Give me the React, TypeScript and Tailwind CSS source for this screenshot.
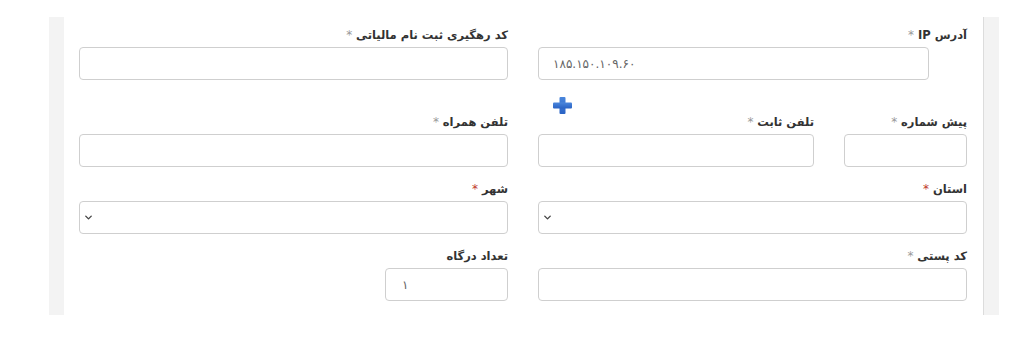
import { ChevronDown } from "lucide-react";

const font = { fontFamily: '"DejaVu Sans", Tahoma, sans-serif' };

const Label = ({ text, req, red }: { text: string; req?: boolean; red?: boolean }) => (
  <div className="h-[16px] mb-[4px] text-[11.5px] leading-[16px] font-bold text-[#333]">
    {text}
    {req && <span className={`font-normal text-[12px] ${red ? "text-[#c0392b]" : "text-[#999]"}`}> *</span>}
  </div>
);

const Input = ({ value, className = "" }: { value?: string; className?: string }) => (
  <div
    dir="ltr"
    className={`h-[33px] border border-[#cfcfcf] rounded-[4px] bg-white flex items-center px-[14px] text-[12px] tracking-[1px] text-[#666] ${className}`}
  >
    {value}
  </div>
);

const Select = () => (
  <div dir="ltr" className="h-[33px] border border-[#cfcfcf] rounded-[4px] bg-white flex items-center px-[3px]">
    <ChevronDown size={11} strokeWidth={3} className="text-[#444]" />
  </div>
);

const PlusIcon = () => (
  <svg width="19" height="17" viewBox="0 0 19 17">
    <defs>
      <linearGradient id="pg" x1="0" y1="0" x2="0" y2="1">
        <stop offset="0" stopColor="#4a86dc" />
        <stop offset="1" stopColor="#2962c4" />
      </linearGradient>
    </defs>
    <rect x="6.5" y="0" width="6" height="17" rx="1" fill="url(#pg)" />
    <rect x="0" y="5.5" width="19" height="6" rx="1" fill="url(#pg)" />
  </svg>
);

export default function App() {
  return (
    <div className="w-[1024px] h-[344px] bg-white pt-[17px] pl-[49px]" style={font}>
      <div className="flex h-[298px]">
        <div className="w-[15px] bg-[#f3f3f3]" />
        <div dir="rtl" className="w-[919px] bg-white pt-[10px] pr-[16px] pl-[15px]">
          {/* row 1 */}
          <div className="grid grid-cols-2 gap-x-[30px] items-start">
            <div>
              <Label text="آدرس IP" req />
              <Input value="۱۸۵.۱۵۰.۱۰۹.۶۰" className="mr-[38px]" />
              <div dir="ltr" className="pl-[15px] mt-[17px] h-[17px] flex">
                <PlusIcon />
              </div>
            </div>
            <div>
              <Label text="کد رهگیری ثبت نام مالیاتی" req />
              <Input />
            </div>
          </div>

          {/* row 2 */}
          <div className="grid grid-cols-2 gap-x-[30px] mb-[14px]">
            <div className="flex gap-x-[30px]">
              <div className="w-[123px]">
                <Label text="پیش شماره" req />
                <Input />
              </div>
              <div className="flex-1">
                <Label text="تلفن ثابت" req />
                <Input />
              </div>
            </div>
            <div>
              <Label text="تلفن همراه" req />
              <Input />
            </div>
          </div>

          {/* row 3 */}
          <div className="grid grid-cols-2 gap-x-[30px] mb-[14px]">
            <div>
              <Label text="استان" req red />
              <Select />
            </div>
            <div>
              <Label text="شهر" req red />
              <Select />
            </div>
          </div>

          {/* row 4 */}
          <div className="grid grid-cols-2 gap-x-[30px]">
            <div>
              <Label text="کد پستی" req />
              <Input />
            </div>
            <div>
              <Label text="تعداد درگاه" />
              <Input value="۱" className="w-[123px] px-[16px]" />
            </div>
          </div>
        </div>
        <div className="w-[16px] bg-[#f3f3f3] border-l border-[#dcdcdc]" />
      </div>
    </div>
  );
}
